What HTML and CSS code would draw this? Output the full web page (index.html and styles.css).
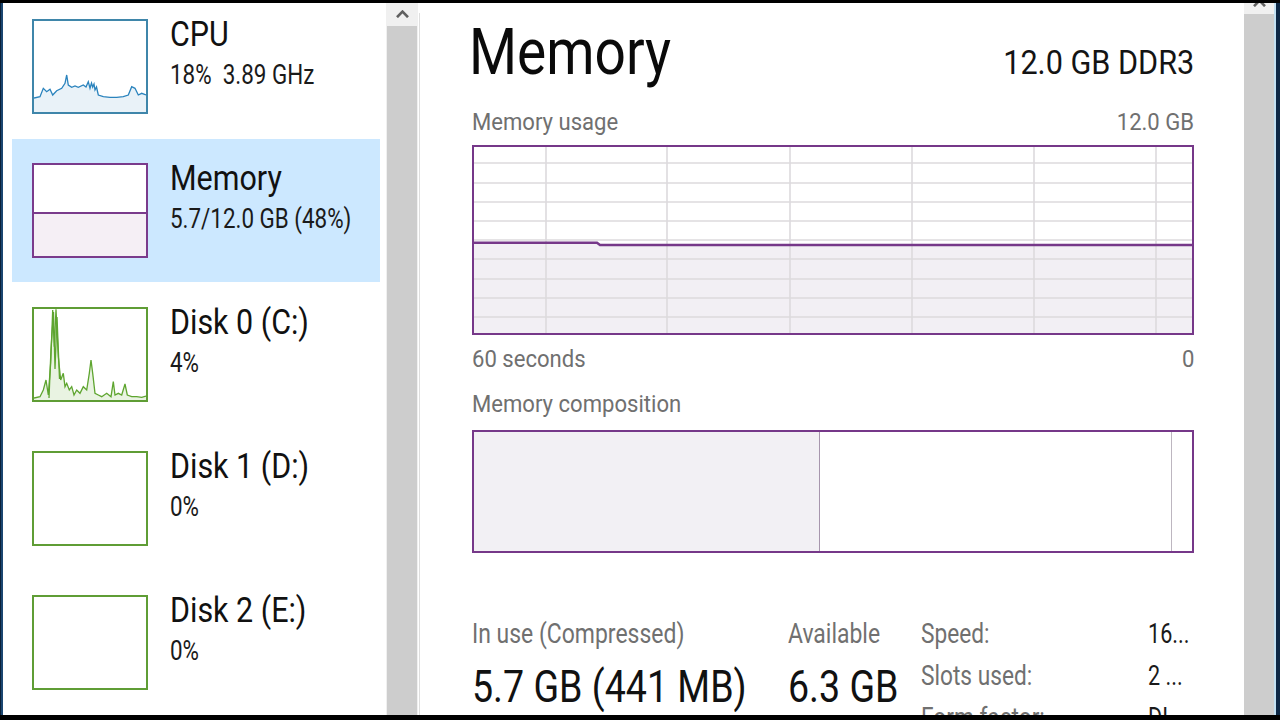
FILE: index.html
```html
<!DOCTYPE html>
<html lang="en">
<head>
<meta charset="utf-8">
<title>Task Manager - Memory</title>
<link rel="stylesheet" href="styles.css">
</head>
<body>
<div class="window">
  <div class="edge-left"></div>

  <aside class="sidebar">
    <ul class="perf-list">
      <li class="perf-item">
        <div class="thumb thumb-cpu">
          <svg class="thumb-svg" width="112" height="91" viewBox="0 0 112 91">
            <path class="cpu-fill" d="M0 77 L6 75.7 L9.3 67.3 L12.7 70.7 L16 68.3 L18.7 74 L22.7 69.7 L27.7 67.3 L31 62.3 L32.7 54 L34.3 64 L37.7 66.3 L41 65 L44.3 66.3 L49.3 64 L52 66 L54.3 60.7 L56 67.3 L57.5 62 L58.7 66 L60 63 L61 69 L62.5 66 L64.3 74 L69.3 75.7 L76 76.3 L82.7 76.3 L89.3 75.7 L94.3 74 L97.7 65.7 L101 67.3 L104.3 74 L107.7 72.3 L112 74 L112 91 L0 91 Z"/>
            <path class="cpu-line" d="M0 77 L6 75.7 L9.3 67.3 L12.7 70.7 L16 68.3 L18.7 74 L22.7 69.7 L27.7 67.3 L31 62.3 L32.7 54 L34.3 64 L37.7 66.3 L41 65 L44.3 66.3 L49.3 64 L52 66 L54.3 60.7 L56 67.3 L57.5 62 L58.7 66 L60 63 L61 69 L62.5 66 L64.3 74 L69.3 75.7 L76 76.3 L82.7 76.3 L89.3 75.7 L94.3 74 L97.7 65.7 L101 67.3 L104.3 74 L107.7 72.3 L112 74"/>
          </svg>
        </div>
        <div class="perf-text">
          <div class="perf-name">CPU</div>
          <div class="perf-value">18%&nbsp; 3.89 GHz</div>
        </div>
      </li>

      <li class="perf-item is-selected">
        <div class="thumb thumb-mem">
          <svg class="thumb-svg" width="112" height="91" viewBox="0 0 112 91">
            <rect class="mem-fill" x="0" y="48" width="112" height="43"/>
            <line class="mem-line" x1="0" y1="48" x2="112" y2="48"/>
          </svg>
        </div>
        <div class="perf-text">
          <div class="perf-name">Memory</div>
          <div class="perf-value">5.7/12.0 GB (48%)</div>
        </div>
      </li>

      <li class="perf-item">
        <div class="thumb thumb-disk">
          <svg class="thumb-svg" width="112" height="91" viewBox="0 0 112 91">
            <path class="disk-fill" d="M0 89 L6 87.7 L9.3 81 L12 71 L14.3 86 L16.7 54 L18.7 1 L20.3 37.7 L22 0.3 L24.3 47.7 L26.7 71 L29.3 64.3 L31 77.7 L32.7 74.3 L35.3 81 L37.7 77.7 L40 86 L42.7 81 L46 84.3 L49.3 77.7 L52.7 81 L55.3 64.3 L57 51 L58.7 64.3 L61 84.3 L64.3 86 L67.7 87.7 L72.7 84.3 L77 87.7 L79.3 72.7 L81 86 L84.3 84.3 L87.7 86 L91 75 L93.3 86 L97.7 87.7 L102.7 87.7 L107.7 88.3 L112 87 L112 91 L0 91 Z"/>
            <path class="disk-line" d="M0 89 L6 87.7 L9.3 81 L12 71 L14.3 86 L16.7 54 L18.7 1 L20.3 37.7 L22 0.3 L24.3 47.7 L26.7 71 L29.3 64.3 L31 77.7 L32.7 74.3 L35.3 81 L37.7 77.7 L40 86 L42.7 81 L46 84.3 L49.3 77.7 L52.7 81 L55.3 64.3 L57 51 L58.7 64.3 L61 84.3 L64.3 86 L67.7 87.7 L72.7 84.3 L77 87.7 L79.3 72.7 L81 86 L84.3 84.3 L87.7 86 L91 75 L93.3 86 L97.7 87.7 L102.7 87.7 L107.7 88.3 L112 87"/>
            <path class="disk-line2" d="M15 89 L17 40 L19.5 3 L21 60 L23 8 L25.5 70"/>
          </svg>
        </div>
        <div class="perf-text">
          <div class="perf-name">Disk 0 (C:)</div>
          <div class="perf-value">4%</div>
        </div>
      </li>

      <li class="perf-item">
        <div class="thumb thumb-disk"></div>
        <div class="perf-text">
          <div class="perf-name">Disk 1 (D:)</div>
          <div class="perf-value">0%</div>
        </div>
      </li>

      <li class="perf-item">
        <div class="thumb thumb-disk"></div>
        <div class="perf-text">
          <div class="perf-name">Disk 2 (E:)</div>
          <div class="perf-value">0%</div>
        </div>
      </li>
    </ul>
  </aside>

  <div class="scrollbar scrollbar-left">
    <div class="scroll-arrow">
      <svg width="13" height="8" viewBox="0 0 13 8"><path d="M1 7.2 L6.5 1.6 L12 7.2" fill="none" stroke="#606060" stroke-width="2.6"/></svg>
    </div>
    <div class="scroll-thumb"></div>
  </div>

  <div class="divider"></div>

  <main class="main">
    <div class="header">
      <h1 class="title">Memory</h1>
      <div class="subtitle">12.0 GB DDR3</div>
    </div>

    <div class="label-row">
      <span>Memory usage</span>
      <span>12.0 GB</span>
    </div>

    <div class="graph">
      <svg class="graph-svg" width="718" height="186" viewBox="0 0 718 186">
        <path class="graph-fill" d="M0 95.7 H123 L126 98 H718 V186 H0 Z"/>
        <g class="grid">
          <line x1="0" y1="16" x2="718" y2="16"/>
          <line x1="0" y1="36" x2="718" y2="36"/>
          <line x1="0" y1="55" x2="718" y2="55"/>
          <line x1="0" y1="74" x2="718" y2="74"/>
          <line x1="0" y1="93" x2="718" y2="93"/>
          <line x1="0" y1="112" x2="718" y2="112"/>
          <line x1="0" y1="132" x2="718" y2="132"/>
          <line x1="0" y1="151" x2="718" y2="151"/>
          <line x1="0" y1="170" x2="718" y2="170"/>
          <line x1="72" y1="0" x2="72" y2="186"/>
          <line x1="193" y1="0" x2="193" y2="186"/>
          <line x1="316" y1="0" x2="316" y2="186"/>
          <line x1="438" y1="0" x2="438" y2="186"/>
          <line x1="560" y1="0" x2="560" y2="186"/>
          <line x1="682" y1="0" x2="682" y2="186"/>
        </g>
        <path class="graph-line" d="M0 95.7 H123 L126 98 H718"/>
      </svg>
    </div>

    <div class="label-row axis-row">
      <span>60 seconds</span>
      <span>0</span>
    </div>

    <div class="label-row section-label">
      <span>Memory composition</span>
    </div>

    <div class="composition">
      <div class="comp-seg comp-inuse"></div>
      <div class="comp-seg comp-modified"></div>
      <div class="comp-seg comp-rest"></div>
    </div>

    <div class="stats">
      <div class="stat stat-inuse">
        <div class="stat-label">In use (Compressed)</div>
        <div class="stat-value">5.7 GB (441 MB)</div>
      </div>
      <div class="stat stat-avail">
        <div class="stat-label">Available</div>
        <div class="stat-value">6.3 GB</div>
      </div>
      <div class="specs">
        <span class="spec-label">Speed:</span><span class="spec-value">16...</span>
        <span class="spec-label">Slots used:</span><span class="spec-value">2 ...</span>
        <span class="spec-label">Form factor:</span><span class="spec-value">DI...</span>
      </div>
    </div>
  </main>

  <div class="scrollbar scrollbar-right">
    <div class="scroll-arrow-cut">
      <svg width="13" height="8" viewBox="0 0 13 8"><path d="M1 7.2 L6.5 1.6 L12 7.2" fill="none" stroke="#606060" stroke-width="2.6"/></svg>
    </div>
    <div class="scroll-thumb"></div>
  </div>

  <div class="edge-right"></div>
</div>
</body>
</html>
```

FILE: styles.css
```css
* {
  box-sizing: border-box;
}

html, body {
  margin: 0;
  padding: 0;
  background: #000;
  width: 1280px;
  height: 720px;
  overflow: hidden;
}

body {
  font-family: "Roboto", "Liberation Sans", sans-serif;
  color: #141414;
}

.window {
  margin-top: 3px;
  width: 1280px;
  height: 712px;
  background: #fff;
  display: flex;
  overflow: hidden;
}

.edge-left {
  width: 3px;
  flex: none;
  background: #1a4670;
  border-left: 1px solid #0b2038;
}

/* ---------- sidebar ---------- */
.sidebar {
  width: 383px;
  flex: none;
  overflow: hidden;
  background: #fff;
}

.perf-list {
  list-style: none;
  margin: -8px 0 0 0;
  padding: 0;
}

.perf-item {
  display: flex;
  height: 143px;
  padding: 24px 0 24px 20px;
  margin: 0 6px 1px 9px;
}

.perf-item.is-selected {
  background: #cce8ff;
}

.thumb {
  width: 116px;
  height: 95px;
  flex: none;
  border: 2px solid;
  background: #fff;
}

.thumb-svg {
  display: block;
}

.thumb-cpu {
  border-color: #3f86aa;
}

.cpu-fill {
  fill: #e9f2f8;
}

.cpu-line {
  fill: none;
  stroke: #2a83bd;
  stroke-width: 1.3;
}

.thumb-mem {
  border-color: #7a3b8c;
}

.mem-fill {
  fill: #f5eff5;
}

.mem-line {
  stroke: #7a3b8c;
  stroke-width: 2.2;
}

.thumb-disk {
  border-color: #5f9d35;
}

.disk-fill {
  fill: #e9f3e2;
}

.disk-line,
.disk-line2 {
  fill: none;
  stroke: #5ea52f;
  stroke-width: 1.3;
}

.perf-text {
  flex: 1;
  min-width: 0;
  margin-left: 22px;
  margin-top: -2px;
}

.perf-name {
  font-size: 35px;
  line-height: 35px;
  color: #111;
  white-space: nowrap;
  transform: scaleX(0.87);
  transform-origin: left center;
}

.perf-value {
  font-size: 28px;
  line-height: 28px;
  margin-top: 9px;
  color: #1a1a1a;
  white-space: nowrap;
  transform: scaleX(0.8);
  transform-origin: left center;
}

/* ---------- scrollbars ---------- */
.scrollbar {
  flex: none;
  background: #f0f0f0;
  display: flex;
  flex-direction: column;
}

.scrollbar-left {
  width: 32px;
}

.scroll-arrow {
  height: 23px;
  flex: none;
  display: flex;
  justify-content: center;
  padding-top: 7px;
}

.scroll-arrow svg {
  display: block;
}

.scrollbar-left .scroll-thumb {
  flex: 1;
  margin: 0 1px;
  background: #cdcdcd;
}

.scrollbar-right {
  width: 30px;
}

.scroll-arrow-cut {
  height: 11px;
  flex: none;
  overflow: hidden;
  display: flex;
  justify-content: center;
}

.scroll-arrow-cut svg {
  display: block;
  margin-top: -4px;
}

.scrollbar-right .scroll-thumb {
  flex: 1;
  background: #cdcdcd;
}

.divider {
  width: 1px;
  flex: none;
  margin: 10px 1px 0 1px;
  background: #dedede;
}

.edge-right {
  width: 6px;
  flex: none;
  background: #0c2745;
  border-left: 2px solid #c2e0f2;
}

/* ---------- main ---------- */
.main {
  width: 823px;
  flex: none;
  height: 712px;
  overflow: hidden;
  padding: 18px 50px 0 51px;
  background: #fff;
}

.header {
  display: flex;
  justify-content: space-between;
  align-items: baseline;
}

.title {
  margin: 0 0 0 -3px;
  font-size: 64px;
  line-height: 64px;
  font-weight: normal;
  color: #0a0a0a;
  transform: scaleX(0.86);
  transform-origin: left center;
}

.subtitle {
  font-size: 34px;
  line-height: 34px;
  color: #141414;
  transform: scaleX(0.9);
  transform-origin: right center;
}

.label-row {
  display: flex;
  justify-content: space-between;
  margin-top: 25px;
  font-size: 24px;
  line-height: 24px;
  color: #707070;
}

.label-row span {
  white-space: nowrap;
  transform: scaleX(0.92);
  transform-origin: left center;
}

.label-row span + span {
  transform-origin: right center;
}

.graph {
  margin-top: 11px;
  height: 190px;
  border: 2px solid #763889;
  background: #fff;
}

.graph-svg {
  display: block;
}

.graph-fill {
  fill: #f2eff4;
}

.grid line {
  stroke: #dcdadd;
  stroke-width: 1.6;
}

.graph-line {
  fill: none;
  stroke: #763889;
  stroke-width: 2.4;
}

.axis-row {
  margin-top: 12px;
}

.section-label {
  margin-top: 21px;
}

.composition {
  margin-top: 14px;
  height: 123px;
  border: 2px solid #763889;
  display: flex;
  background: #fff;
}

.comp-inuse {
  width: 346px;
  background: #f2f0f4;
  border-right: 1px solid #a796ad;
}

.comp-modified {
  width: 352px;
  border-right: 1px solid #bdb6c0;
}

.comp-rest {
  flex: 1;
}

.stats {
  margin-top: 68px;
  display: flex;
}

.stat-inuse {
  width: 316px;
  flex: none;
}

.stat-avail {
  width: 133px;
  flex: none;
}

.stat-label {
  font-size: 27px;
  line-height: 27px;
  color: #707070;
  white-space: nowrap;
  transform: scaleX(0.85);
  transform-origin: left center;
}

.stat-value {
  font-size: 45px;
  line-height: 45px;
  margin-top: 16px;
  color: #111;
  white-space: nowrap;
  transform: scaleX(0.835);
  transform-origin: left center;
}

.specs {
  display: grid;
  grid-template-columns: 227px auto;
  row-gap: 15px;
  font-size: 27px;
  line-height: 27px;
}

.spec-label {
  color: #707070;
  white-space: nowrap;
  transform: scaleX(0.84);
  transform-origin: left center;
}

.spec-value {
  color: #1a1a1a;
  white-space: nowrap;
  transform: scaleX(0.8);
  transform-origin: left center;
}
```
